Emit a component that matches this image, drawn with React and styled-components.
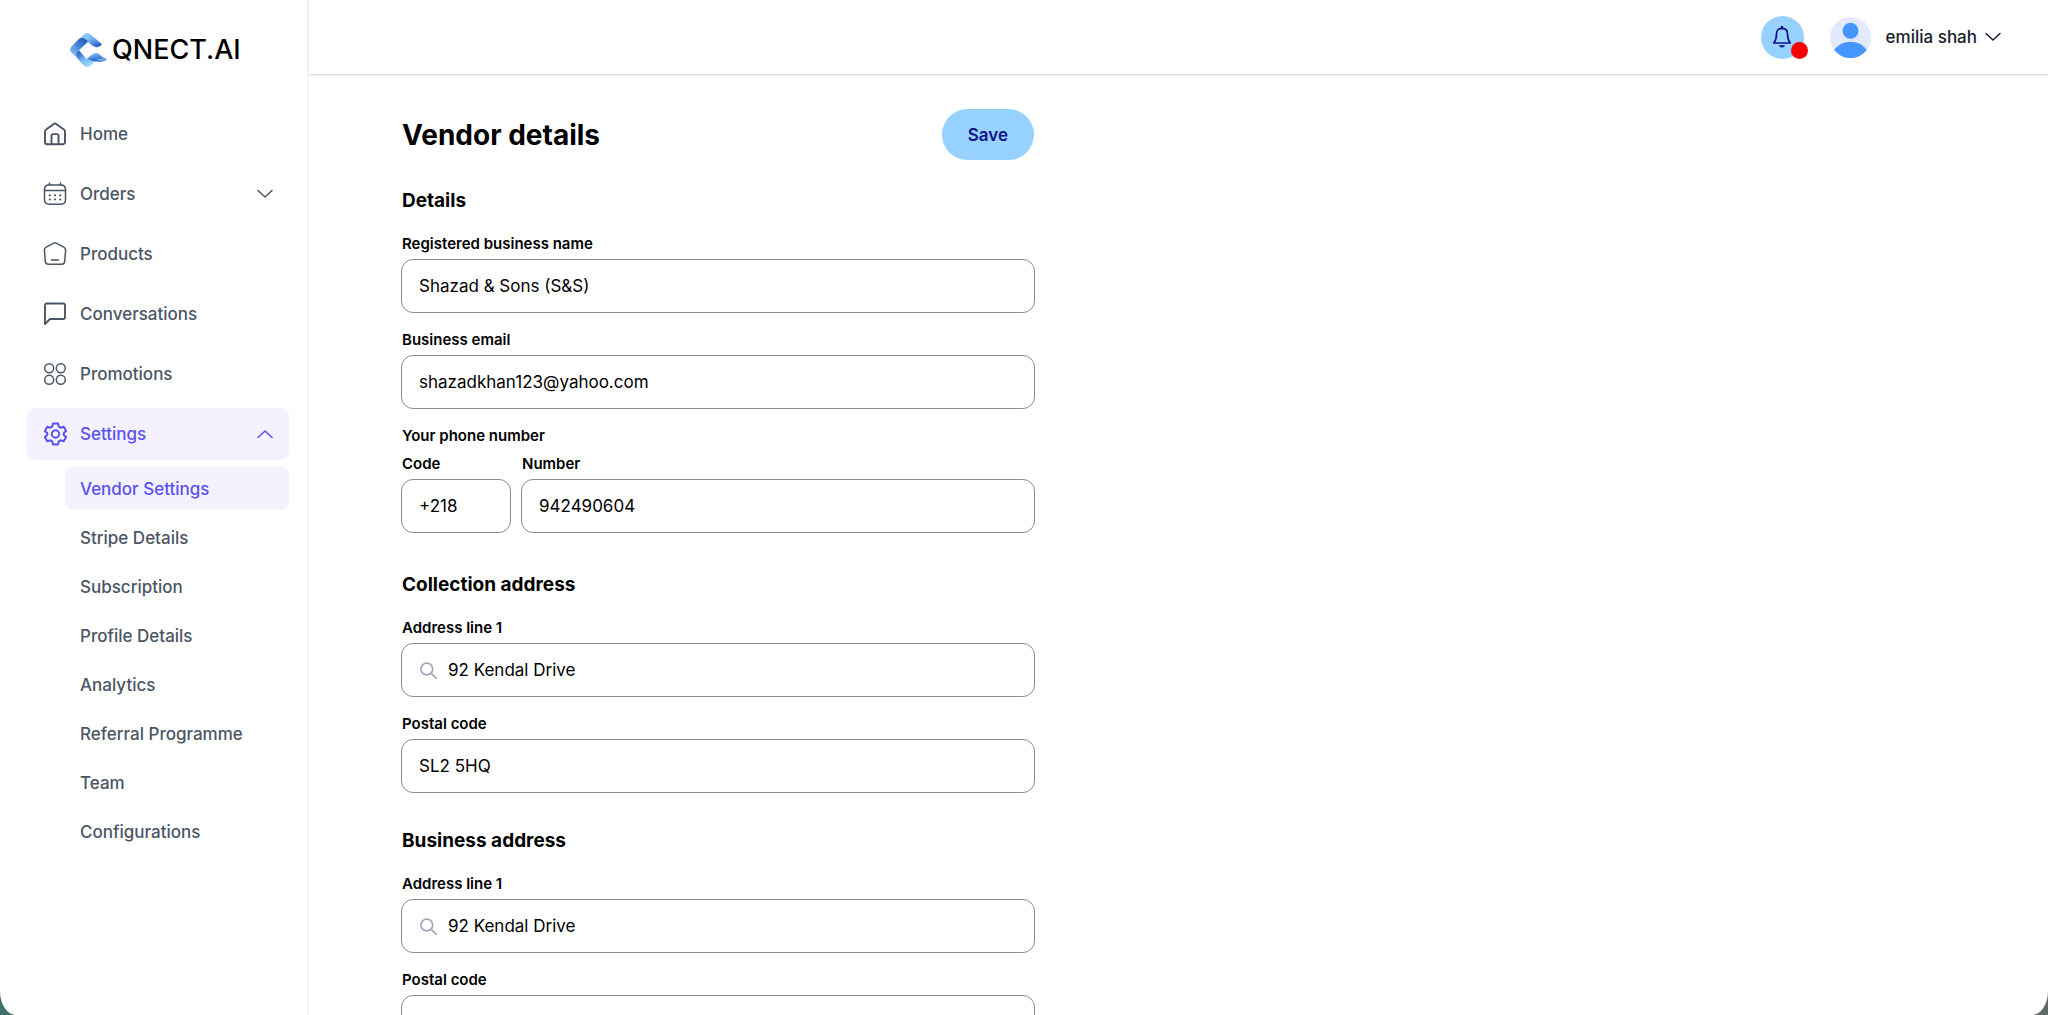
import React from "react";
import styled, { createGlobalStyle, css } from "styled-components";

const Global = createGlobalStyle`
  *, *::before, *::after { box-sizing: border-box; }
  body {
    margin: 0;
    background: linear-gradient(90deg, #3f6f66, #5f6b6a);
    font-family: Inter, "Liberation Sans", sans-serif;
    color: #000;
  }
  button, input { font-family: inherit; }
`;

const Shell = styled.div`
  display: flex;
  height: 100vh;
  overflow: hidden;
  background: #fff;
  border-radius: 0 0 16px 16px / 0 0 24px 24px;
`;

const Sidebar = styled.aside`
  flex: 0 0 309px;
  padding: 32px 18px 0 27px;
  border-right: 2px solid #f5f5f7;
`;

const Brand = styled.a`
  display: flex;
  align-items: center;
  gap: 5px;
  height: 35px;
  margin: 0 0 41px 43px;
  color: #000;
  font-size: 27px;
  font-weight: 500;
  line-height: 35px;
  text-decoration: none;
`;

const NavList = styled.ul`
  display: flex;
  flex-direction: column;
  gap: 8px;
  margin: 0;
  padding: 0;
  list-style: none;
`;

const navColors = css`
  border: 0;
  border-radius: 8px;
  background: ${(p) => (p.$active ? "#f3f2fe" : "transparent")};
  color: ${(p) => (p.$active ? "#5b50f0" : "#4b5565")};
  font-size: 17px;
  font-weight: 500;
  text-decoration: none;
`;

const NavItem = styled.a`
  ${navColors}
  display: flex;
  align-items: center;
  gap: 13px;
  width: 100%;
  height: 52px;
  padding: 0 16px;
  text-align: left;
`;

const NavText = styled.span`
  flex: 1;
`;

const SubList = styled(NavList)`
  gap: 6px;
  margin: 7px 0 0 38px;
`;

const SubItem = styled.a`
  ${navColors}
  display: flex;
  align-items: center;
  height: 43px;
  padding: 0 15px;
`;

const Content = styled.div`
  display: flex;
  flex: 1;
  flex-direction: column;
  min-width: 0;
`;

const TopBar = styled.header`
  display: flex;
  flex: 0 0 75px;
  align-items: center;
  justify-content: flex-end;
  padding: 0 47px 0 0;
  border-bottom: 1px solid #dfdfe1;
  box-shadow: 0 1px 2px rgba(0, 0, 0, 0.06);
`;

const BellButton = styled.button`
  position: relative;
  display: flex;
  align-items: center;
  justify-content: center;
  width: 43px;
  height: 43px;
  margin-right: 26px;
  padding: 0;
  border: 0;
  border-radius: 50%;
  background: #96d1ff;
  color: #12128a;
`;

const Dot = styled.span`
  position: absolute;
  right: -4px;
  bottom: 0;
  width: 17px;
  height: 17px;
  border-radius: 50%;
  background: #f90000;
`;

const UserButton = styled.button`
  display: flex;
  align-items: center;
  padding: 0;
  border: 0;
  background: none;
  color: #17202e;
  font-size: 17px;
  font-weight: 500;
`;

const UserName = styled.span`
  margin: 0 8px 0 15px;
`;

const Main = styled.main`
  flex: 1;
  min-height: 0;
  padding: 34px 92px 0;
  overflow: hidden;
`;

const Form = styled.form`
  max-width: 634px;
`;

const TitleRow = styled.div`
  display: flex;
  align-items: center;
  justify-content: space-between;
  margin-bottom: 29px;
  padding: 0 1px;
`;

const Title = styled.h1`
  margin: 0;
  font-size: 28px;
  font-weight: 700;
  line-height: 36px;
`;

const SaveButton = styled.button`
  height: 51px;
  padding: 0 26px;
  border: 0;
  border-radius: 26px;
  background: #96d1ff;
  color: #12128a;
  font-size: 17px;
  font-weight: 600;
`;

const Section = styled.section`
  display: flex;
  flex-direction: column;
  gap: 17px;
  margin-bottom: 36px;
`;

const SectionTitle = styled.h2`
  margin: 0 0 4px;
  padding-left: 1px;
  font-size: 19px;
  font-weight: 700;
  line-height: 24px;
`;

const Field = styled.div`
  display: flex;
  flex-direction: column;
  gap: 5px;
  flex: ${(p) => (p.$width ? `0 0 ${p.$width}` : "1")};
  min-width: 0;
`;

const labelText = css`
  padding-left: 1px;
  font-size: 15px;
  font-weight: 600;
  line-height: 20px;
`;

const Label = styled.label`
  ${labelText}
`;

const PhoneGroup = styled.fieldset`
  margin: 0;
  padding: 0 0 4px;
  border: 0;
`;

const Legend = styled.legend`
  ${labelText}
  margin-bottom: 8px;
`;

const PhoneRow = styled.div`
  display: flex;
  gap: 10px;
`;

const Box = styled.div`
  display: flex;
  align-items: center;
  gap: 10px;
  height: 54px;
  padding: 0 17px;
  border: 1px solid #8c8c8c;
  border-radius: 12px;
  color: #a0a5b8;
`;

const Input = styled.input`
  flex: 1;
  min-width: 0;
  height: 100%;
  padding: 0;
  border: 0;
  outline: 0;
  background: transparent;
  color: #000;
  font-size: 17px;
  font-weight: 400;
`;

function Icon({ children, size = 24, stroke = 1.5 }) {
  return (
    <svg width={size} height={size} viewBox="0 0 24 24" fill="none" stroke="currentColor"
      strokeWidth={stroke} strokeLinecap="round" strokeLinejoin="round" aria-hidden="true">
      {children}
    </svg>
  );
}

const HomeIcon = () => (
  <Icon stroke={1.9}>
    <path d="M2 9.600c0-.9.4-1.500 1.100-2L10.800 1.900a2 2 0 0 1 2.400 0l7.700 5.700c.7.500 1.100 1.100 1.100 2V20a2.300 2.300 0 0 1-2.300 2.300H4.300A2.300 2.300 0 0 1 2 20z" />
    <path d="M8.500 22v-8.300c0-1 .6-1.600 1.600-1.600h3.800c1 0 1.600.6 1.600 1.600V22" />
  </Icon>
);

const CalendarIcon = () => (
  <Icon stroke={1.5}>
    <path d="M1.500 7.500c0-3.200 1.200-4.600 4.500-4.600h12c3.300 0 4.500 1.400 4.500 4.600v10c0 3.300-1.200 4.700-4.500 4.700H6c-3.300 0-4.500-1.400-4.500-4.700z" />
    <path d="M1.500 8.600h21M6.500 1v2M17.500 1v2" />
    <path d="M6.800 13.300h.01M12 13.300h.01M17.200 13.300h.01M6.800 17.500h.01M12 17.500h.01M17.200 17.500h.01" strokeWidth="2.200" />
  </Icon>
);

const ProductIcon = () => (
  <Icon stroke={1.5}>
    <path d="M10.800 1.100a3 3 0 0 1 2.400 0l7.600 4.100c1.300.7 1.900 1.700 1.800 3.200l-.9 11c-.2 1.900-1.200 2.900-3.100 2.900H5.400c-1.900 0-2.900-1-3.100-2.900l-.9-11c-.1-1.500.5-2.500 1.800-3.200z" />
    <path d="M8.500 17.900h7" />
  </Icon>
);

const ChatIcon = () => (
  <Icon stroke={1.9}>
    <path d="M2 22V3.300C2 2.200 2.700 1.500 3.800 1.500h16.400c1.100 0 1.800.7 1.800 1.800v11.900c0 1.100-.7 1.800-1.800 1.800H7z" />
  </Icon>
);

const CirclesIcon = () => (
  <Icon stroke={1.5}>
    <circle cx="6.200" cy="6.200" r="4.500" />
    <circle cx="17.800" cy="6.200" r="4.500" />
    <circle cx="6.200" cy="17.700" r="4.500" />
    <circle cx="17.800" cy="17.700" r="4.500" />
  </Icon>
);

const GearIcon = () => (
  <Icon stroke={2}>
    <path d="M10 1.600h5l.8 3.100 1.800 1 3.100-1 2.400 4.200-2.300 2.100v2l2.300 2.100-2.400 4.200-3.100-1-1.800 1-.8 3.100h-5l-.8-3.100-1.800-1-3.100 1-2.400-4.200L4.200 13v-2L1.900 8.900l2.400-4.200 3.100 1 1.800-1z" />
    <circle cx="12.500" cy="12" r="3.700" />
  </Icon>
);

const Chevron = ({ up }) => (
  <svg width="16" height="10" viewBox="0 0 16 10" fill="none" stroke="currentColor"
    strokeWidth="1.500" strokeLinecap="round" strokeLinejoin="round" aria-hidden="true">
    <path d={up ? "M1 8.500L8 2l7 6.500" : "M1 1.500L8 8l7-6.500"} />
  </svg>
);

const BellIcon = () => (
  <svg width="20" height="24" viewBox="0 0 20 24" fill="none" stroke="currentColor"
    strokeWidth="1.700" strokeLinejoin="round" aria-hidden="true">
    <path d="M10 3.300c-3.500 0-5.500 2.400-5.500 5.600 0 4.600-1 6.800-2.700 9.100h16.400c-1.700-2.300-2.700-4.500-2.700-9.100 0-3.200-2-5.600-5.500-5.600z" />
    <path d="M10 1v2" strokeWidth="2.400" />
    <path d="M7 20.200h6c-.4 1.300-1.500 2.300-3 2.300s-2.600-1-3-2.300z" fill="currentColor" stroke="none" />
  </svg>
);

const Avatar = () => (
  <svg width="41" height="41" viewBox="0 0 41 41" role="img" aria-label="emilia shah">
    <circle cx="20.500" cy="20.500" r="20.500" fill="#e3eaff" />
    <circle cx="20.500" cy="13.800" r="8" fill="#4696ff" />
    <path d="M4.200 33C8 27.500 14 24.700 20.500 24.700S33 27.500 36.800 33A20.500 20.500 0 0 1 4.200 33z" fill="#4696ff" />
  </svg>
);

const SearchIcon = () => (
  <svg width="19" height="19" viewBox="0 0 19 19" fill="none" stroke="currentColor"
    strokeWidth="1.600" strokeLinecap="round" aria-hidden="true">
    <circle cx="7.800" cy="8" r="5.900" />
    <path d="M12.200 12.400l5 4.800" />
  </svg>
);

const Logo = () => (
  <svg width="37" height="34" viewBox="0 0 111 102" aria-hidden="true">
    <defs>
      <linearGradient id="top" x1="0.300" y1="0" x2="1" y2="0.900">
        <stop offset="0" stopColor="#93cdfc" />
        <stop offset="0.350" stopColor="#82bcf5" />
        <stop offset="1" stopColor="#1d55bd" />
      </linearGradient>
      <linearGradient id="left" x1="0.900" y1="0" x2="0.200" y2="0.900">
        <stop offset="0" stopColor="#1c50b5" />
        <stop offset="0.500" stopColor="#4687dc" />
        <stop offset="1" stopColor="#8ac6fb" />
      </linearGradient>
      <linearGradient id="bottom" x1="0" y1="0.100" x2="0.700" y2="0.800">
        <stop offset="0" stopColor="#1f56bb" />
        <stop offset="0.600" stopColor="#80bcf6" />
        <stop offset="1" stopColor="#9ad4ff" />
      </linearGradient>
      <linearGradient id="tail" x1="0.300" y1="0" x2="0.700" y2="1">
        <stop offset="0" stopColor="#86c1f8" />
        <stop offset="0.550" stopColor="#4384d9" />
        <stop offset="1" stopColor="#1b4fb4" />
      </linearGradient>
    </defs>
    <path d="M24 22L40 5Q50-4 61 4L96 34Q90 45 76 42Q70 41 66 37L50 24Q38 14 24 22z" fill="url(#top)" />
    <path d="M4 41L26 19Q38 10 50 22L54 26L27 52Q20 62 28 80L5 60Q-4 51 4 41z" fill="url(#left)" />
    <path d="M27 52Q14 66 24 78L40 96Q50 106 61 98L82 80Q66 84 53 79L50 78z" fill="url(#bottom)" />
    <path d="M50 78L64 66Q78 55 90 65Q96 74 111 79Q104 86 88 86Q66 86 50 78z" fill="url(#tail)" />
    <path d="M78 81Q92 72 111 79Q102 87 78 81z" fill="#72b2f2" />
  </svg>
);

const navigation = [
  { label: "Home", icon: HomeIcon },
  { label: "Orders", icon: CalendarIcon, expandable: true },
  { label: "Products", icon: ProductIcon },
  { label: "Conversations", icon: ChatIcon },
  { label: "Promotions", icon: CirclesIcon },
  {
    label: "Settings",
    icon: GearIcon,
    expandable: true,
    active: true,
    children: [
      "Vendor Settings",
      "Stripe Details",
      "Subscription",
      "Profile Details",
      "Analytics",
      "Referral Programme",
      "Team",
      "Configurations",
    ],
  },
];

function NavEntry({ item }) {
  const ItemIcon = item.icon;
  const target = item.expandable
    ? { as: "button", type: "button", "aria-expanded": Boolean(item.children) }
    : { href: "#" };
  return (
    <li>
      <NavItem $active={item.active} {...target}>
        <ItemIcon />
        <NavText>{item.label}</NavText>
        {item.expandable && <Chevron up={item.active} />}
      </NavItem>
      {item.children && (
        <SubList>
          {item.children.map((name, i) => (
            <li key={name}>
              <SubItem href="#" $active={i === 0}>{name}</SubItem>
            </li>
          ))}
        </SubList>
      )}
    </li>
  );
}

function TextField({ id, label, value, search, width, type = "text" }) {
  return (
    <Field $width={width}>
      <Label htmlFor={id}>{label}</Label>
      <Box>
        {search && <SearchIcon />}
        <Input id={id} type={type} defaultValue={value} />
      </Box>
    </Field>
  );
}

function AddressSection({ id, title }) {
  return (
    <Section>
      <SectionTitle>{title}</SectionTitle>
      <TextField id={`${id}-line1`} label="Address line 1" value="92 Kendal Drive" search />
      <TextField id={`${id}-postal`} label="Postal code" value="SL2 5HQ" />
    </Section>
  );
}

export default function App() {
  return (
    <>
      <Global />
      <Shell>
        <Sidebar>
          <Brand href="#"><Logo />QNECT.AI</Brand>
          <nav>
            <NavList>
              {navigation.map((item) => <NavEntry key={item.label} item={item} />)}
            </NavList>
          </nav>
        </Sidebar>
        <Content>
          <TopBar>
            <BellButton type="button" aria-label="Notifications">
              <BellIcon />
              <Dot />
            </BellButton>
            <UserButton type="button">
              <Avatar />
              <UserName>emilia shah</UserName>
              <Chevron />
            </UserButton>
          </TopBar>
          <Main>
            <Form onSubmit={(e) => e.preventDefault()}>
              <TitleRow>
                <Title>Vendor details</Title>
                <SaveButton type="submit">Save</SaveButton>
              </TitleRow>
              <Section>
                <SectionTitle>Details</SectionTitle>
                <TextField id="name" label="Registered business name" value="Shazad & Sons (S&S)" />
                <TextField id="email" type="email" label="Business email" value="shazadkhan123@yahoo.com" />
                <PhoneGroup>
                  <Legend>Your phone number</Legend>
                  <PhoneRow>
                    <TextField id="code" label="Code" value="+218" width="110px" />
                    <TextField id="number" type="tel" label="Number" value="942490604" />
                  </PhoneRow>
                </PhoneGroup>
              </Section>
              <AddressSection id="collection" title="Collection address" />
              <AddressSection id="business" title="Business address" />
            </Form>
          </Main>
        </Content>
      </Shell>
    </>
  );
}
